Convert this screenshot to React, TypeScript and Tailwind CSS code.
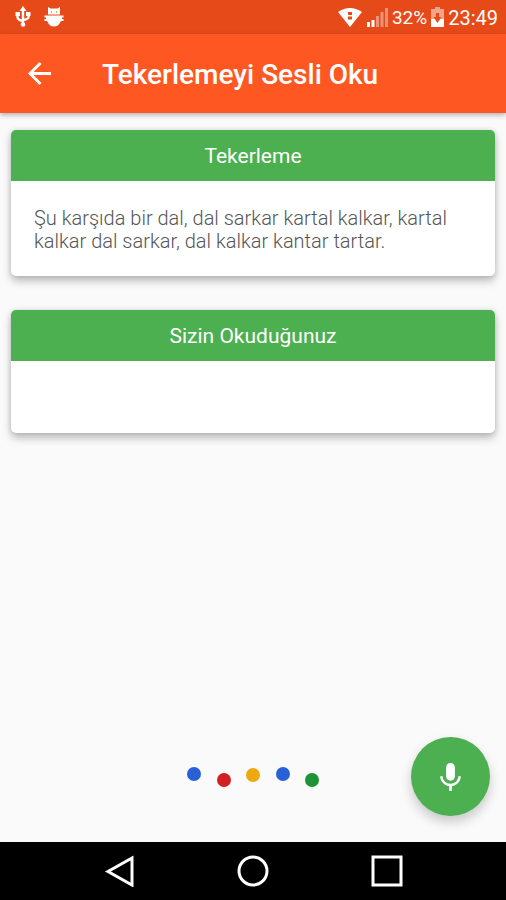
import type { ReactNode } from "react";

function UsbIcon() {
  return (
    <svg viewBox="0 0 16 22" className="h-[22px] w-4" fill="none" stroke="#fff" strokeWidth="2.400" aria-hidden="true">
      <path d="M8 3v16M2.500 8v3q0 3 5.500 4M13.500 8v3q0 2-5.500 3" />
      <path d="M8 0l3.500 5h-7zM0.500 6h4.500v4H.5zM11 6h4.500v4H11z" fill="#fff" stroke="none" />
      <circle cx="8" cy="18.500" r="2.300" fill="#fff" stroke="none" />
    </svg>
  );
}

function RobotCatIcon() {
  return (
    <svg viewBox="0 0 20 20" className="size-5" fill="#fff" aria-hidden="true">
      <path d="M4 0l2.500 1.500h7L16 0v7.500H4zM3.500 8.500h13H19.500v2H18v1.500h1.500v2h-2.700q-1.800 5.500-6.800 5.500t-6.800-5.500H.5v-2H2v-1.500H.5v-2z" />
      <path d="M7 4.500h1V5.500H7zM12 4.500h1v1h-1z" fill="#e64a19" />
    </svg>
  );
}

function WifiIcon() {
  return (
    <svg viewBox="0 0 26 20" className="h-5 w-[26px]" aria-hidden="true">
      <path d="M1 5Q13-3 25 5L13 20z" fill="#fff" />
      <path d="M11 5h4v3h-4zM11 9.500h4v3h-4z" fill="#e64a19" />
    </svg>
  );
}

function SignalIcon() {
  return (
    <svg viewBox="0 0 22 20" className="h-5 w-[22px]" fill="#fff" aria-hidden="true">
      <path d="M1 15h3v5H1zM5.500 13h3v7h-3z" />
      <path d="M10 9h3v11h-3zM14.500 5h3v15h-3zM19 1h3v19h-3z" opacity=".4" />
    </svg>
  );
}

function BatteryIcon() {
  return (
    <svg viewBox="0 0 13 20" className="h-5 w-[13px]" aria-hidden="true">
      <path d="M4 0h5v2h4v18H0V2h4z" fill="#fff" opacity=".5" />
      <path d="M0 12h13v8H0z" fill="#fff" />
      <path d="M5 6h3v4h2.500l-4 6-4-6H5z" fill="#e64a19" />
    </svg>
  );
}

function Card({ title, children }: { title: string; children?: ReactNode }) {
  return (
    <section className="overflow-hidden rounded-[5px] bg-white shadow-[0_5px_9px_rgba(0,0,0,0.25),0_0_5px_rgba(0,0,0,0.12)]">
      <h2 className="bg-[#4caf50] pt-[13px] pb-[11px] text-center text-[21px] leading-[27px] text-white">{title}</h2>
      <div className="min-h-[72px] px-[23px] pt-[26px] pb-[23px] text-[20px] leading-[23px] font-light text-[#555]">
        {children}
      </div>
    </section>
  );
}

const voiceDots = [
  { x: 7, y: 7, color: "#2861d6" },
  { x: 37, y: 13, color: "#d32023" },
  { x: 66, y: 8, color: "#eda910" },
  { x: 96, y: 7, color: "#2861d6" },
  { x: 125, y: 13, color: "#1e9336" },
];

export default function App() {
  return (
    <div className="flex min-h-screen flex-col bg-[#fafafa] font-['Roboto',sans-serif]">
      <div className="flex h-[34px] items-center justify-between bg-[#e64a19] pr-2 pl-[15px] text-white">
        <div className="flex items-center gap-[13px]">
          <UsbIcon />
          <RobotCatIcon />
        </div>
        <div className="flex items-center text-[20px] leading-6">
          <WifiIcon />
          <span className="ml-[3px]"><SignalIcon /></span>
          <span className="ml-1 pt-[2px] text-[19px]">32%</span>
          <span className="mx-1"><BatteryIcon /></span>
          <span className="pt-[2px]">23:49</span>
        </div>
      </div>

      <header className="relative flex h-[79px] items-center gap-[39px] bg-[#ff5722] px-[15px] text-white shadow-[0_2px_5px_rgba(0,0,0,0.3)]">
        <button type="button" aria-label="Geri" className="flex size-12 items-center justify-center">
          <svg viewBox="4 4 16 16" className="size-[23px]" fill="#fff" aria-hidden="true">
            <path d="M20 11H7.830l5.590-5.590L12 4l-8 8 8 8 1.410-1.410L7.830 13H20v-2z" />
          </svg>
        </button>
        <h1 className="pt-[2px] text-[28px] leading-8 font-medium">Tekerlemeyi Sesli Oku</h1>
      </header>

      <main className="flex grow flex-col px-[11px] pt-[17px]">
        <div className="flex flex-col gap-[34px]">
          <Card title="Tekerleme">
            <p>Şu karşıda bir dal, dal sarkar kartal kalkar, kartal kalkar dal sarkar, dal kalkar kantar tartar.</p>
          </Card>
          <Card title="Sizin Okuduğunuz" />
        </div>

        <div className="mt-auto grid grid-cols-[1fr_auto_1fr] items-center px-[5px] pb-[26px]">
          <svg viewBox="0 0 132 20" className="col-start-2 h-5 w-[132px]" aria-hidden="true">
            {voiceDots.map((dot) => (
              <circle key={dot.x} cx={dot.x} cy={dot.y} r="7" fill={dot.color} />
            ))}
          </svg>
          <button
            type="button"
            aria-label="Konuş"
            className="flex size-[79px] items-center justify-center justify-self-end rounded-full bg-[#4caf50] shadow-[0_6px_12px_rgba(0,0,0,0.2)]"
          >
            <svg viewBox="5 2 14 19" className="h-7 w-[21px]" fill="#fff" aria-hidden="true">
              <path d="M12 14c1.660 0 3-1.340 3-3V5c0-1.660-1.340-3-3-3S9 3.340 9 5v6c0 1.660 1.340 3 3 3zm5.300-3c0 3-2.540 5.100-5.300 5.100S6.700 14 6.700 11H5c0 3.410 2.720 6.230 6 6.720V21h2v-3.280c3.280-.48 6-3.300 6-6.720h-1.700z" />
            </svg>
          </button>
        </div>
      </main>

      <nav className="flex h-[58px] items-center justify-center gap-[102px] bg-black">
        <button type="button" aria-label="Geri dön" className="size-8">
          <svg viewBox="0 0 32 32" className="size-8" fill="none" stroke="#fff" strokeWidth="3" aria-hidden="true">
            <path d="M29 3v27L5 16.500z" />
          </svg>
        </button>
        <button type="button" aria-label="Ana ekran" className="size-8">
          <svg viewBox="0 0 32 32" className="size-8" fill="none" stroke="#fff" strokeWidth="3" aria-hidden="true">
            <circle cx="16" cy="16" r="14" />
          </svg>
        </button>
        <button type="button" aria-label="Son uygulamalar" className="size-8">
          <svg viewBox="0 0 32 32" className="size-8" fill="none" stroke="#fff" strokeWidth="3" aria-hidden="true">
            <path d="M2 2h28v28H2z" />
          </svg>
        </button>
      </nav>
    </div>
  );
}
